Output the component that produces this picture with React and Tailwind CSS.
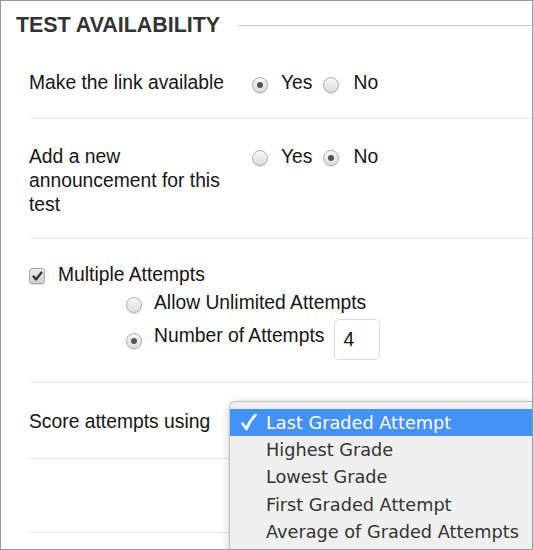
import React from "react";

const Radio = ({ checked, className = "" }) => (
  <span
    className={`inline-flex items-center justify-center w-[16px] h-[16px] rounded-full border border-[#b0b0b0] bg-gradient-to-b from-[#f7f7f7] to-[#dcdcdc] shadow-[0_1px_1px_rgba(0,0,0,0.15)] shrink-0 ${className}`}
  >
    {checked && <span className="w-[6px] h-[6px] rounded-full bg-[#555]" />}
  </span>
);

const Checkbox = ({ className = "" }) => (
  <span
    className={`inline-flex items-center justify-center w-[16px] h-[16px] rounded-[3px] border border-[#a8a8a8] bg-gradient-to-b from-[#ececec] to-[#cfcfcf] shadow-[0_1px_1px_rgba(0,0,0,0.15)] shrink-0 ${className}`}
  >
    <svg width="11" height="10" viewBox="0 0 11 10">
      <path d="M1.5 5.5 L4 8.5 L9.5 1.5" fill="none" stroke="#333" strokeWidth="2.2" strokeLinecap="round" strokeLinejoin="round" />
    </svg>
  </span>
);

const options = [
  "Last Graded Attempt",
  "Highest Grade",
  "Lowest Grade",
  "First Graded Attempt",
  "Average of Graded Attempts",
];

export default function App() {
  return (
    <div className="relative w-[533px] h-[550px] overflow-hidden border border-[#999] bg-white font-['Liberation_Sans',Arial,sans-serif] text-[19.3px] leading-[24px] text-[#151515]">
      {/* header */}
      <div className="flex items-center pl-[15px] pt-[12px]">
        <h2 className="text-[21.4px] leading-[24px] font-bold text-[#333]">TEST AVAILABILITY</h2>
        <div className="flex-1 h-px bg-[#cccccc] ml-[18px]" />
      </div>

      <div className="ml-[28px]">
        {/* make link available */}
        <div className="flex items-start pt-[34px] pb-[23px] border-b border-[#e9e9e9]">
          <div className="w-[200px] mr-[23px]">Make the link available</div>
          <div className="flex items-start">
            <Radio checked className="mt-[6px]" />
            <span className="ml-[13px]">Yes</span>
            <Radio className="ml-[11px] mt-[6px]" />
            <span className="ml-[14px]">No</span>
          </div>
        </div>

        {/* announcement */}
        <div className="flex items-start pt-[26px] pb-[21px] border-b border-[#e9e9e9]">
          <div className="w-[200px] mr-[23px]">Add a new announcement for this test</div>
          <div className="flex items-start">
            <Radio className="mt-[5px]" />
            <span className="ml-[13px]">Yes</span>
            <Radio checked className="ml-[11px] mt-[5px]" />
            <span className="ml-[14px]">No</span>
          </div>
        </div>

        {/* multiple attempts */}
        <div className="pt-[24px] pb-[22px] border-b border-[#e9e9e9]">
          <div className="flex items-start">
            <Checkbox className="mt-[5px]" />
            <span className="ml-[13px]">Multiple Attempts</span>
          </div>
          <div className="flex items-start ml-[97px] mt-[4px]">
            <Radio className="mt-[6px]" />
            <span className="ml-[12px]">Allow Unlimited Attempts</span>
          </div>
          <div className="flex items-start ml-[97px] mt-[4px]">
            <Radio checked className="mt-[14px]" />
            <span className="ml-[12px] mt-[5px]">Number of Attempts</span>
            <div className="ml-[10px] w-[46px] h-[41px] rounded-[5px] border border-[#dcdcdc] pl-[8px] pt-[8px] text-[#111]">
              4
            </div>
          </div>
        </div>

        {/* score attempts */}
        <div className="pt-[27px] pb-[24px] border-b border-[#e9e9e9]">
          <div>Score attempts using</div>
        </div>
        <div className="h-[74px] border-b border-[#e9e9e9]" />
      </div>

      {/* open select menu */}
      <div className="absolute left-[228px] top-[400px] w-[320px] h-[200px] rounded-tl-[6px] border-t border-l border-[#c2c2c2] bg-[#efefef] shadow-[0_2px_8px_rgba(0,0,0,0.2)] pt-[7px] font-['DejaVu_Sans',sans-serif] text-[17.7px] text-[#333]">
        {options.map((o, i) => (
          <div
            key={o}
            className={`flex items-center h-[27.33px] ${i === 0 ? "bg-[#4491f7] text-white" : ""}`}
          >
            <span className="w-[36px] flex justify-end pr-[9px]">
              {i === 0 && (
                <svg width="16" height="17" viewBox="0 0 16 17">
                  <path d="M1.5 9.5 L5.5 15 C7.5 9.5 10.5 5 14.5 1" fill="none" stroke="white" strokeWidth="2.6" strokeLinecap="round" strokeLinejoin="round" />
                </svg>
              )}
            </span>
            <span>{o}</span>
          </div>
        ))}
      </div>
    </div>
  );
}
